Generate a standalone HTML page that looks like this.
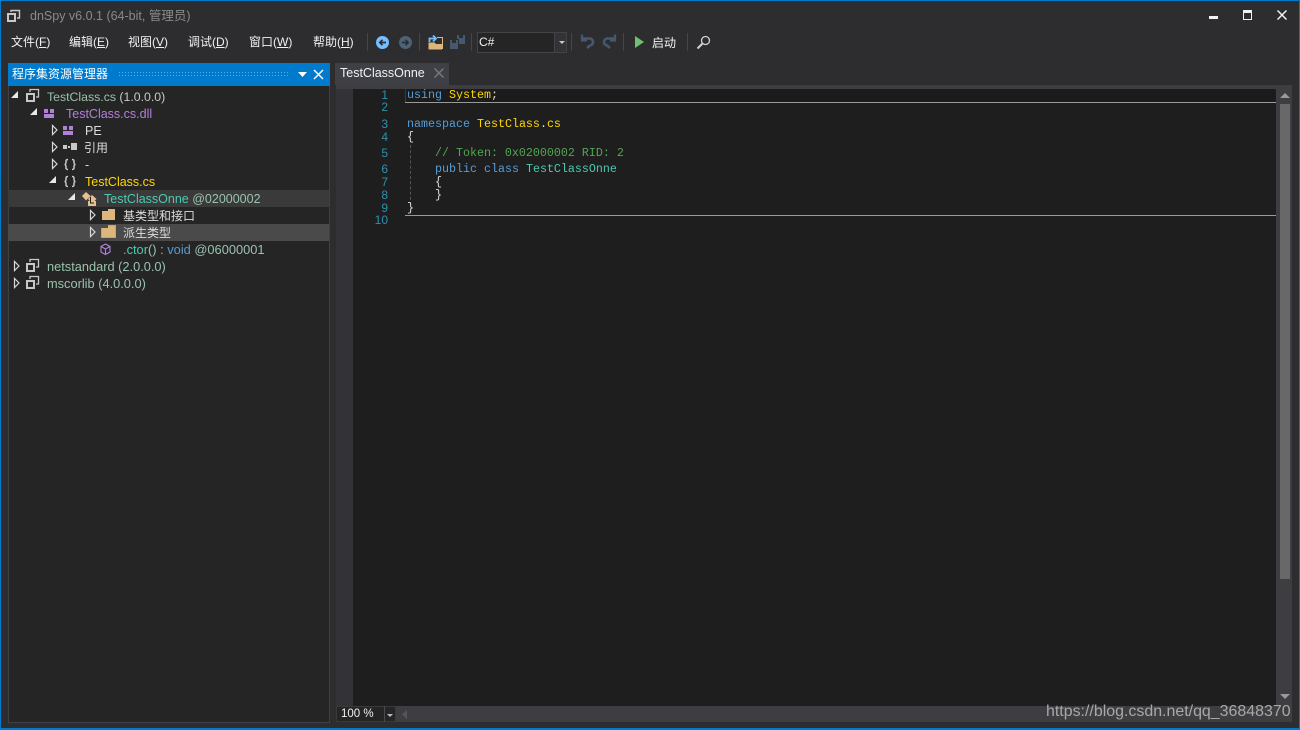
<!DOCTYPE html>
<html><head><meta charset="utf-8"><style>
html,body{margin:0;padding:0;background:#2d2d30}
#p{position:relative;width:1300px;height:730px;overflow:hidden;background:#2d2d30;font-family:"Liberation Sans","Noto Sans CJK SC",sans-serif;font-size:12.5px;color:#dcdcdc}
#p div,#p svg{position:absolute}
.t{white-space:nowrap;line-height:16px;height:16px}
.m{top:34px;font-size:12px;color:#f1f1f1}
.m u{text-underline-offset:1px}
.c{font-family:"Liberation Mono",monospace;font-size:11.67px;white-space:pre;left:407px;line-height:14px;height:14px;color:#dcdcdc}
.n{font-family:"Liberation Sans",sans-serif;font-size:12px;color:#2b91af;width:36px;text-align:right;left:352px;line-height:14px;height:14px}
.sep{top:33px;width:1px;height:18px;background:#46464a}
</style></head><body><div id="p">
<div style="left:0;top:0;width:1300px;height:1px;background:#007acc"></div>
<div style="left:0;top:0;width:1px;height:730px;background:#007acc"></div>
<div style="left:1299px;top:0;width:1px;height:730px;background:#007acc"></div>
<div style="left:0;top:728px;width:1300px;height:2px;background:#007acc"></div>

<svg style="left:7px;top:9px" width="14" height="14" viewBox="0 0 14 14" fill="none" stroke="#c8c8c8" stroke-width="1.4"><rect x="1" y="5" width="7" height="7" stroke-width="2"/><path d="M4 3V1.500H12.500V9H10"/></svg>
<div class="t" style="left:30px;top:8px;color:#8a8a8a;font-size:12.5px">dnSpy v6.0.1 (64-bit, 管理员)</div>

<div style="left:1209px;top:16px;width:9px;height:3px;background:#f1f1f1"></div>
<div style="left:1243px;top:10px;width:7px;height:6px;border:1px solid #f1f1f1;border-top:3px solid #f1f1f1"></div>
<svg style="left:1277px;top:10px" width="10" height="10"><path d="M.5 .5L9.500 9.500M9.500 .5L.5 9.500" stroke="#f1f1f1" stroke-width="1.500"/></svg>

<div class="t m" style="left:11px">文件(<u>F</u>)</div>
<div class="t m" style="left:69px">编辑(<u>E</u>)</div>
<div class="t m" style="left:128px">视图(<u>V</u>)</div>
<div class="t m" style="left:188px">调试(<u>D</u>)</div>
<div class="t m" style="left:249px">窗口(<u>W</u>)</div>
<div class="t m" style="left:313px">帮助(<u>H</u>)</div>

<div class="sep" style="left:367px"></div>
<svg style="left:376px;top:36px" width="13" height="13"><circle cx="6.500" cy="6.500" r="6.500" fill="#75beff"/><path d="M10 6.500H4M6.500 3.800L3.800 6.500L6.500 9.200" stroke="#2d2d30" stroke-width="1.700" fill="none"/></svg>
<svg style="left:399px;top:36px" width="13" height="13"><circle cx="6.500" cy="6.500" r="6.500" fill="#4c6278"/><path d="M3 6.500H9M6.500 3.800L9.200 6.500L6.500 9.200" stroke="#2d2d30" stroke-width="1.700" fill="none"/></svg>
<div class="sep" style="left:419px"></div>
<svg style="left:428px;top:34px" width="15" height="16"><path d="M.5 8.500H6.500L8 10H14V15.500H.5Z" fill="#dcb67a"/><path d="M9 3.500H14.500V15" fill="none" stroke="#dcb67a"/><path d="M1.500 8V4.500H7.500M5 1.500L8 4.500L5 7.500" stroke="#75beff" stroke-width="1.800" fill="none"/></svg>
<svg style="left:450px;top:35px" width="16" height="15" fill="#44596f"><path d="M0 5H2V8H6V5H8V14H0Z"/><path d="M7 0H9V3H13V0H15V9H9V4H7Z"/></svg>
<div class="sep" style="left:471px"></div>
<div style="left:477px;top:32px;width:76px;height:19px;background:#252526;border:1px solid #434346"></div>
<div class="t" style="left:479px;top:34px;font-size:12px;color:#f1f1f1">C#</div>
<div style="left:554px;top:32px;width:11px;height:19px;background:#333337;border:1px solid #434346"></div>
<svg style="left:559px;top:41px" width="7" height="4"><path d="M0 0H6L3 3Z" fill="#c8c8c8"/></svg>
<div class="sep" style="left:571px"></div>
<svg style="left:580px;top:34px" width="15" height="15" fill="none" stroke="#44596f" stroke-width="2.600"><path d="M3 4.500H9A3.500 3.500 0 0 1 10 11.500L7 14"/><path d="M2 .5V6.500H7" stroke-width="2.200"/></svg>
<svg style="left:602px;top:34px" width="15" height="15" fill="none" stroke="#44596f" stroke-width="2.600"><path d="M12 4.500H6A3.500 3.500 0 0 0 5 11.500L8 14"/><path d="M13 .5V6.500H8" stroke-width="2.200"/></svg>
<div class="sep" style="left:623px"></div>
<svg style="left:635px;top:35px" width="9" height="14"><path d="M0 1L9 7L0 13Z" fill="#6fc06f"/></svg>
<div class="t" style="left:652px;top:35px;font-size:12px;color:#f1f1f1">启动</div>
<div class="sep" style="left:687px"></div>
<svg style="left:696px;top:35px" width="15" height="15" fill="none" stroke="#d0d0d0"><circle cx="9.500" cy="5.500" r="4" stroke-width="1.300"/><path d="M6.500 8.500L1.500 13.500" stroke-width="2"/></svg>

<!-- left panel -->
<div style="left:8px;top:63px;width:322px;height:660px;background:#252526;box-shadow:inset 0 0 0 1px #3f3f46"></div>
<div style="left:8px;top:63px;width:322px;height:23px;background:#007acc"></div>
<div class="t" style="left:12px;top:66px;color:#fff;font-size:12px">程序集资源管理器</div>
<div style="left:118px;top:71px;width:172px;height:7px;background-image:radial-gradient(circle,#5aaee0 .6px,transparent .7px);background-size:3px 3px"></div>
<svg style="left:298px;top:72px" width="9" height="5"><path d="M0 0H9L4.500 5Z" fill="#fff"/></svg>
<svg style="left:313px;top:69px" width="11" height="11"><path d="M1 1L10 10M10 1L1 10" stroke="#fff" stroke-width="1.500"/></svg>

<div style="left:8px;top:190px;width:321px;height:17px;background:#3a3a3b"></div>
<div style="left:8px;top:224px;width:321px;height:17px;background:#4a4a4a"></div>

<svg style="left:0;top:85px" width="330" height="210">
<g fill="#e8e8e8">
<path d="M18 6V13H11Z"/><path d="M37 23V30H30Z"/><path d="M56 91V98H49Z"/><path d="M75 108V115H68Z"/>
</g>
<g fill="none" stroke="#d8d8d8" stroke-width="1.200">
<path d="M52.500 40.500V49.500L57 45Z"/><path d="M52.500 57.500V66.500L57 62Z"/><path d="M52.500 74.500V83.500L57 79Z"/>
<path d="M90.500 125.500V134.500L95 130Z"/><path d="M90.500 142.500V151.500L95 147Z"/>
<path d="M14.500 176.500V185.500L19 181Z"/><path d="M14.500 193.500V202.500L19 198Z"/>
</g>
<g fill="none" stroke="#c8c8c8" stroke-width="1.300">
<rect x="27" y="9" width="7" height="7" stroke-width="2"/><path d="M30 7V4.500H38.500V12H36"/>
<rect x="27" y="179" width="7" height="7" stroke-width="2"/><path d="M30 177V174.500H38.500V182H36"/>
<rect x="27" y="196" width="7" height="7" stroke-width="2"/><path d="M30 194V191.500H38.500V199H36"/>
</g>
<g fill="#b180d7">
<rect x="44" y="24" width="4" height="4"/><rect x="50" y="24" width="4" height="4"/><rect x="44" y="29" width="10" height="4"/>
<rect x="63" y="41" width="4" height="4"/><rect x="69" y="41" width="4" height="4"/><rect x="63" y="46" width="10" height="4"/>
</g>
<g fill="#c8c8c8"><rect x="63" y="60" width="4" height="4"/><rect x="68" y="61" width="2" height="2"/><rect x="71" y="58" width="6" height="7"/></g>
<g fill="none" stroke="#c8c8c8" stroke-width="1.500">
<path d="M68 74.500C65.500 74.500 66 76 66 77.500C66 79 65 79.500 64.500 79.500C65 79.500 66 80 66 81.500C66 83 65.500 84.500 68 84.500"/>
<path d="M72 74.500C74.500 74.500 74 76 74 77.500C74 79 75 79.500 75.500 79.500C75 79.500 74 80 74 81.500C74 83 74.500 84.500 72 84.500"/>
<path d="M68 91.500C65.500 91.500 66 93 66 94.500C66 96 65 96.500 64.500 96.500C65 96.500 66 97 66 98.500C66 100 65.500 101.500 68 101.500"/>
<path d="M72 91.500C74.500 91.500 74 93 74 94.500C74 96 75 96.500 75.500 96.500C75 96.500 74 97 74 98.500C74 100 74.500 101.500 72 101.500"/>
</g>
<g fill="#e8c090"><path d="M82 111L86 107L90.500 111L86 115.500Z"/><path d="M88 114L92 110L96.500 114L92 118.500Z"/><rect x="88" y="116" width="8" height="5"/></g>
<path d="M90.500 112V118H94" stroke="#222" fill="none"/>
<g fill="#dcb67a"><path d="M102 126H108V124H115V135H102Z"/><path d="M102 143H108V141H115V152H102Z"/></g>
<path d="M101.500 143V152.500H115.500V140.500H108" stroke="#c8a468" fill="none"/>
<g fill="none" stroke="#b180d7" stroke-width="1.100"><path d="M105.500 159L110 161.500V167L105.500 169.500L101 167V161.500Z"/><path d="M101 161.500L105.500 164L110 161.500M105.500 164V169.500"/></g>
</svg>

<div class="t" style="left:47px;top:89px;color:#c8c8c8;font-size:12.3px"><span style="color:#9ac2ae">TestClass.cs</span> (1.0.0.0)</div>
<div class="t" style="left:66px;top:106px;color:#b180d7">TestClass.cs.dll</div>
<div class="t" style="left:85px;top:123px;color:#dcdcdc">PE</div>
<div class="t" style="left:84px;top:140px;color:#dcdcdc;font-size:12px">引用</div>
<div class="t" style="left:85px;top:157px;color:#dcdcdc">-</div>
<div class="t" style="left:85px;top:174px;color:#ffd700">TestClass.cs</div>
<div class="t" style="left:104px;top:191px;color:#9ac2ae"><span style="color:#4ec9b0">TestClassOnne</span> @02000002</div>
<div class="t" style="left:123px;top:208px;color:#dcdcdc;font-size:12px">基类型和接口</div>
<div class="t" style="left:123px;top:225px;color:#dcdcdc;font-size:12px">派生类型</div>
<div class="t" style="left:123px;top:242px;color:#9ac2ae;font-size:12.85px"><span style="color:#4ec9b0">.ctor</span>() : <span style="color:#569cd6">void</span> @06000001</div>
<div class="t" style="left:47px;top:259px;color:#9ac2ae;font-size:12.8px">netstandard (2.0.0.0)</div>
<div class="t" style="left:47px;top:276px;color:#9ac2ae;font-size:12.8px">mscorlib (4.0.0.0)</div>

<!-- tab -->
<div style="left:335px;top:63px;width:114px;height:22px;background:#3f3f46"></div>
<div class="t" style="left:340px;top:65px;color:#f1f1f1">TestClassOnne</div>
<svg style="left:434px;top:68px" width="10" height="10"><path d="M.5 .5L9.500 9.500M9.500 .5L.5 9.500" stroke="#77777b" stroke-width="1.500"/></svg>

<!-- editor -->
<div style="left:336px;top:85px;width:956px;height:637px;background:#3e3e42"></div>
<div style="left:336px;top:89px;width:940px;height:617px;background:#1e1e1e"></div>
<div style="left:336px;top:89px;width:17px;height:617px;background:#333337"></div>
<div style="left:405px;top:89px;width:870px;height:13px;background:#1b1b1b"></div>
<div style="left:405px;top:102px;width:871px;height:1px;background:#9a9a9a"></div>
<div style="left:405px;top:89px;width:1px;height:13px;background:#3a3a3a"></div>
<div style="left:405px;top:215px;width:871px;height:1px;background:#9a9a9a"></div>
<div style="left:410px;top:145px;width:0;height:60px;border-left:1px dashed #555"></div>

<div class="n" style="top:88px">1</div><div class="n" style="top:100px">2</div><div class="n" style="top:117px">3</div><div class="n" style="top:130px">4</div><div class="n" style="top:146px">5</div><div class="n" style="top:162px">6</div><div class="n" style="top:175px">7</div><div class="n" style="top:188px">8</div><div class="n" style="top:201px">9</div><div class="n" style="top:213px">10</div>

<div class="c" style="top:88px"><span style="color:#569cd6">using</span> <span style="color:#ffd700">System</span>;</div>
<div class="c" style="top:117px"><span style="color:#569cd6">namespace</span> <span style="color:#ffd700">TestClass</span>.<span style="color:#ffd700">cs</span></div>
<div class="c" style="top:130px">{</div>
<div class="c" style="top:146px">    <span style="color:#51a651">// Token: 0x02000002 RID: 2</span></div>
<div class="c" style="top:162px">    <span style="color:#569cd6">public</span> <span style="color:#569cd6">class</span> <span style="color:#4ec9b0">TestClassOnne</span></div>
<div class="c" style="top:175px">    {</div>
<div class="c" style="top:188px">    }</div>
<div class="c" style="top:201px">}</div>

<!-- scrollbar -->
<div style="left:1280px;top:104px;width:10px;height:475px;background:#686868"></div>
<svg style="left:1280px;top:93px" width="10" height="6"><path d="M5 0L10 5H0Z" fill="#999"/></svg>
<svg style="left:1280px;top:694px" width="10" height="6"><path d="M0 0H10L5 5Z" fill="#999"/></svg>

<!-- bottom -->
<div style="left:336px;top:706px;width:60px;height:16px;background:#252526;box-shadow:inset 0 0 0 1px #3a3a3d"></div>
<div style="left:384px;top:706px;width:1px;height:16px;background:#4a4a4d"></div>
<div class="t" style="left:341px;top:707px;font-size:11.500px;color:#f1f1f1;line-height:15px">100 %</div>
<svg style="left:387px;top:714px" width="7" height="4"><path d="M0 0H6L3 3Z" fill="#bbb"/></svg>
<svg style="left:402px;top:710px" width="6" height="9"><path d="M5 0V9L0 4.500Z" fill="#55555a"/></svg>

<div class="t" style="left:1046px;top:703px;font-size:15.950px;line-height:18px;height:18px;color:#a8a8a8">https://blog.csdn.net/qq_36848370</div>
</div></body></html>
